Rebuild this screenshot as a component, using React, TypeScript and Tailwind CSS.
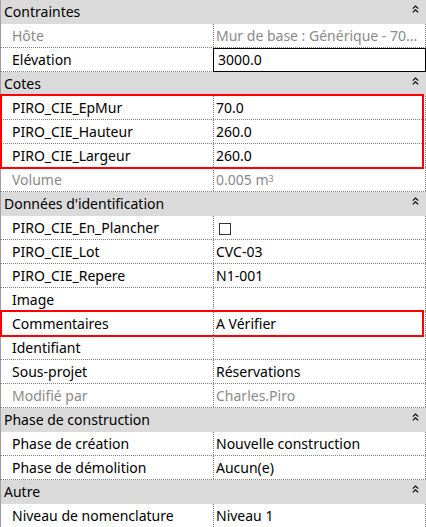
import React from "react";

const Chevrons = () => (
  <svg width="7" height="8" viewBox="0 0 7 8" className="absolute right-[7px] top-[5px]">
    <path d="M0.8 3.6 L3.5 1 L6.2 3.6" fill="none" stroke="#000" strokeWidth="1.1" />
    <path d="M0.8 7.4 L3.5 4.8 L6.2 7.4" fill="none" stroke="#000" strokeWidth="1.1" />
  </svg>
);

const Header = ({ label }: { label: string }) => (
  <div className="relative flex h-6 items-center border-l border-[#a0a0a0] bg-[#dadada] pl-[3px] text-black">
    <span className="leading-[20px]">{label}</span>
    <Chevrons />
  </div>
);

const DataRow = ({
  label,
  value,
  gray,
  boxed,
}: {
  label: string;
  value?: React.ReactNode;
  gray?: boolean;
  boxed?: boolean;
}) => (
  <div
    className={`flex h-6 border-b border-dotted border-b-[#808080] ${
      gray ? "text-[#8a8a8a]" : "text-black"
    }`}
  >
    <div className="flex w-[213px] shrink-0 items-center border-l border-[#a0a0a0] pl-[11px]">
      <span className="whitespace-nowrap leading-[20px]">{label}</span>
    </div>
    <div className="relative flex min-w-0 flex-1 items-center border-l border-r border-dotted border-[#808080] pl-[2px] pr-[2px]">
      {boxed ? (
        <div className="absolute -left-px -right-px top-0 -bottom-px border border-black" />
      ) : null}
      <span className={`whitespace-nowrap leading-[20px] ${boxed ? "pl-[2px]" : ""}`}>{value}</span>
    </div>
  </div>
);

const RedBox = ({ children }: { children: React.ReactNode }) => (
  <div className="relative">
    {children}
    <div className="pointer-events-none absolute -top-[2px] left-0 right-[2px] -bottom-px border-2 border-[#ff0000]" />
  </div>
);

export default function App() {
  return (
    <div
      className="w-[426px] h-[527px] overflow-hidden bg-white text-[14px] leading-none"
      style={{ fontFamily: '"Noto Sans", "Open Sans", sans-serif' }}
    >
      <Header label="Contraintes" />
      <DataRow label="Hôte" value="Mur de base : Générique - 70..." gray />
      <DataRow label="Elévation" value="3000.0" boxed />
      <Header label="Cotes" />
      <RedBox>
        <DataRow label="PIRO_CIE_EpMur" value="70.0" />
        <DataRow label="PIRO_CIE_Hauteur" value="260.0" />
        <DataRow label="PIRO_CIE_Largeur" value="260.0" />
      </RedBox>
      <DataRow
        label="Volume"
        gray
        value={
          <>
            0.005 m<sup className="relative -top-[3px] text-[9px]">3</sup>
          </>
        }
      />
      <Header label="Données d'identification" />
      <DataRow
        label="PIRO_CIE_En_Plancher"
        value={<span className="ml-[3px] mt-[1px] inline-block h-[12px] w-[12px] border border-[#333] align-middle" />}
      />
      <DataRow label="PIRO_CIE_Lot" value="CVC-03" />
      <DataRow label="PIRO_CIE_Repere" value="N1-001" />
      <DataRow label="Image" value="" />
      <RedBox>
        <DataRow label="Commentaires" value="A Vérifier" />
      </RedBox>
      <DataRow label="Identifiant" value="" />
      <DataRow label="Sous-projet" value="Réservations" />
      <DataRow label="Modifié par" value="Charles.Piro" gray />
      <Header label="Phase de construction" />
      <DataRow label="Phase de création" value="Nouvelle construction" />
      <DataRow label="Phase de démolition" value="Aucun(e)" />
      <Header label="Autre" />
      <DataRow label="Niveau de nomenclature" value="Niveau 1" />
    </div>
  );
}
